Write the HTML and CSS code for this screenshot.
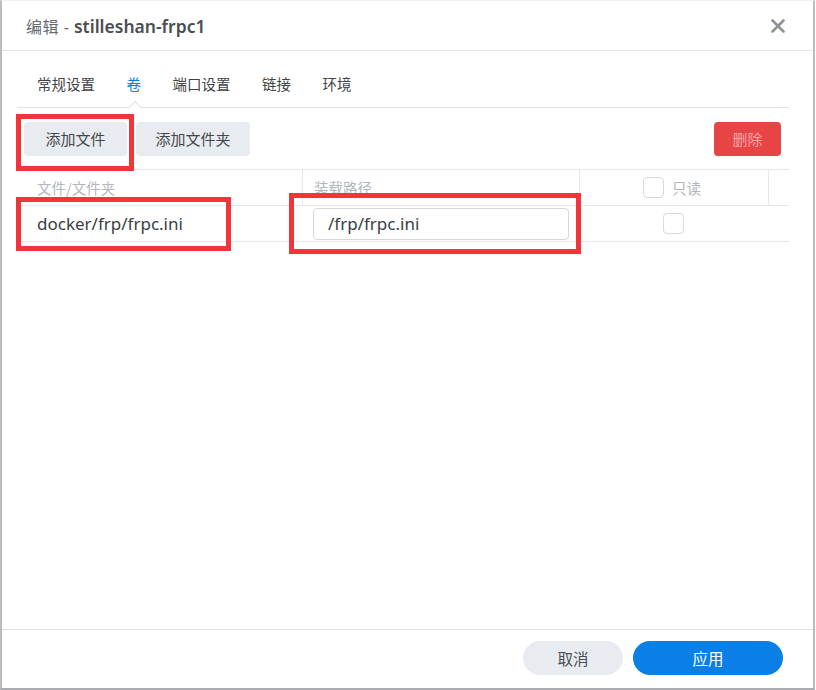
FILE: index.html
```html
<!DOCTYPE html>
<html lang="zh-CN">
<head>
<meta charset="utf-8">
<title>编辑 - stilleshan-frpc1</title>
<link rel="stylesheet" href="styles.css">
</head>
<body>
<div class="dialog">
  <header class="head">
    <div class="title"><span class="t-gray">编辑 - </span><span class="t-name">stilleshan-frpc1</span></div>
    <svg class="close" width="14" height="14" viewBox="0 0 14 14"><path d="M1.5 1.5 L12.5 12.5 M12.5 1.5 L1.5 12.5" stroke="#8e9298" stroke-width="2.6" stroke-linecap="round"/></svg>
  </header>
  <div class="body">
    <nav class="tabs">
      <span class="tab">常规设置</span>
      <span class="tab active">卷</span>
      <span class="tab">端口设置</span>
      <span class="tab">链接</span>
      <span class="tab">环境</span>
    </nav>
    <div class="toolbar">
      <div class="left">
        <button class="btn gray">添加文件</button>
        <button class="btn gray">添加文件夹</button>
      </div>
      <button class="btn red">删除</button>
    </div>
    <div class="table">
      <div class="row hrow">
        <div class="cell c1">文件/文件夹</div>
        <div class="cell c2">装载路径</div>
        <div class="cell c3 center"><span class="chk"></span><span>只读</span></div>
        <div class="cell c4"></div>
      </div>
      <div class="row brow">
        <div class="cell c1 dark">docker/frp/frpc.ini</div>
        <div class="cell c2"><div class="input">/frp/frpc.ini</div></div>
        <div class="cell c3 center"><span class="chk"></span></div>
        <div class="cell c4"></div>
      </div>
    </div>
  </div>
  <footer class="foot">
    <button class="pill cancel">取消</button>
    <button class="pill apply">应用</button>
  </footer>
  <div class="mark m1"></div>
  <div class="mark m2"></div>
  <div class="mark m3"></div>
</div>
</body>
</html>
```

FILE: styles.css
```css
html, body {
  margin: 0;
  padding: 0;
  background: #ffffff;
}
body {
  font-family: "Noto Sans", "Noto Sans CJK SC", sans-serif;
  color: #333;
  width: 816px;
  height: 690px;
  overflow: hidden;
}
.dialog {
  position: relative;
  box-sizing: border-box;
  width: 815px;
  height: 690px;
  border-left: 2px solid #b9bcc0;
  border-right: 2px solid #b9bcc0;
  border-bottom: 2px solid #a9acb0;
  border-top: 1px solid #eef0f2;
  display: flex;
  flex-direction: column;
  background: #fff;
}
.head {
  height: 49px;
  border-bottom: 1px solid #e2e5e9;
  display: flex;
  align-items: center;
  justify-content: space-between;
  padding: 0 28px 0 24px;
  flex: none;
}
.title {
  font-family: "Noto Sans", "Noto Sans CJK SC", sans-serif;
  display: flex;
  align-items: baseline;
  white-space: pre;
}
.t-gray { color: #666a70; font-size: 16px; letter-spacing: 0.5px; }
.t-name { color: #4a4e54; font-weight: 600; font-size: 17.5px; }
.close { display: block; }
.body {
  flex: 1;
  padding: 0 24px 0 15px;
}
.tabs {
  display: flex;
  height: 56px;
  align-items: flex-end;
  border-bottom: 1px solid #dfe3e8;
  position: relative;
  padding-left: 20px;
}
.tab {
  font-size: 14.5px;
  color: #3f4348;
  font-family: "Noto Sans CJK SC", sans-serif;
  line-height: 20px;
  padding-bottom: 13px;
  margin-right: 31.5px;
  position: relative;
}
.tab.active { color: #0a80e6; }
.tab.active::after {
  content: "";
  position: absolute;
  left: 3px;
  bottom: -1px;
  width: 9px;
  height: 9px;
  background: #fff;
  border-left: 1px solid #dfe3e8;
  border-top: 1px solid #dfe3e8;
  transform: translateY(5px) rotate(45deg);
}
.toolbar {
  display: flex;
  justify-content: space-between;
  align-items: center;
  height: 61px;
  padding: 0 8px 0 7px;
}
.left { display: flex; gap: 9px; }
.btn {
  border: none;
  border-radius: 4px;
  height: 34px;
  font-size: 15px;
  font-family: "Noto Sans CJK SC", sans-serif;
  padding: 0;
}
.btn.gray {
  background: #e8ecf0;
  color: #44484d;
}
.left .btn:first-child { width: 103px; }
.left .btn:nth-child(2) { width: 114px; }
.btn.red {
  width: 67px;
  background: #e74446;
  color: #f6a6a6;
}
.table {
  border-top: 1px solid #e3e6ea;
  width: 772px;
}
.row {
  display: flex;
  border-bottom: 1px solid #e3e6ea;
}
.hrow { height: 35px; }
.brow { height: 35px; }
.cell {
  box-sizing: border-box;
  display: flex;
  align-items: center;
}
.c1 { width: 285px; padding-left: 20px; }
.c2 { width: 277px; padding-left: 11px; }
.c3 { width: 189px; }
.c4 { width: 21px; }
.hrow .cell {
  font-size: 14.5px;
  color: #b3b7bc;
  font-family: "Noto Sans CJK SC", sans-serif;
}
.hrow .c2, .hrow .c3, .hrow .c4 { border-left: 1px solid #e6e9ec; }
.center { justify-content: center; gap: 8px; }
.hrow .c3 { padding-right: 4px; }
.chk {
  display: inline-block;
  box-sizing: border-box;
  width: 21px;
  height: 21px;
  border: 1px solid #d6dade;
  border-radius: 4px;
  background: #fff;
}
.dark {
  font-size: 17px;
  color: #3a3e43;
}
.input {
  box-sizing: border-box;
  width: 256px;
  height: 32px;
  border: 1px solid #d4d8dd;
  border-radius: 4px;
  display: flex;
  align-items: center;
  padding-left: 14px;
  font-size: 17px;
  color: #3a3e43;
}
.foot {
  flex: none;
  box-sizing: border-box;
  height: 59px;
  border-top: 1px solid #dde1e5;
  display: flex;
  justify-content: flex-end;
  align-items: flex-start;
  padding-top: 11px;
  padding-right: 30px;
  gap: 10px;
}
.pill {
  height: 34px;
  border: none;
  border-radius: 17px;
  font-size: 15.5px;
  font-family: "Noto Sans CJK SC", sans-serif;
}
.cancel { width: 100px; background: #e8ecf0; color: #4a4e54; }
.apply { width: 150px; background: #0a7fe6; color: #fff; }
.mark {
  position: absolute;
  box-sizing: border-box;
  border: 5px solid #f2353b;
}
.m1 { left: 14px; top: 113px; width: 118px; height: 57px; }
.m2 { left: 14px; top: 196px; width: 215px; height: 54px; }
.m3 { left: 287px; top: 192px; width: 292px; height: 61px; }
```
